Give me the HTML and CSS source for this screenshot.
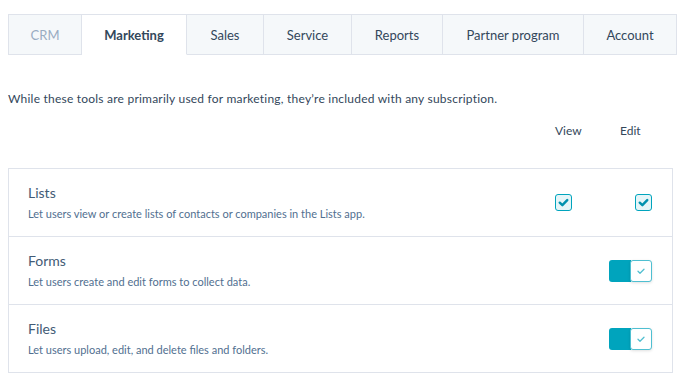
FILE: index.html
```html
<!DOCTYPE html>
<html>
<head>
<meta charset="utf-8">
<link rel="stylesheet" href="styles.css">
</head>
<body>
<div class="page">
  <nav class="tabs">
    <div class="tab tab-disabled">CRM</div>
    <div class="tab tab-active">Marketing</div>
    <div class="tab">Sales</div>
    <div class="tab">Service</div>
    <div class="tab">Reports</div>
    <div class="tab">Partner program</div>
    <div class="tab">Account</div>
  </nav>
  <p class="intro">While these tools are primarily used for marketing, they’re included with any subscription.</p>
  <div class="colheads">
    <span class="colhead colhead-view">View</span>
    <span class="colhead colhead-edit">Edit</span>
  </div>
  <div class="table">
    <div class="row">
      <div class="info">
        <div class="title">Lists</div>
        <div class="desc">Let users view or create lists of contacts or companies in the Lists app.</div>
      </div>
      <div class="controls">
        <span class="check"><svg viewBox="0 0 16 16" width="16" height="16"><path d="M4 8.2 L6.8 10.8 L12 5.4" fill="none" stroke="#0091ae" stroke-width="2.6" stroke-linecap="round" stroke-linejoin="round"/></svg></span>
        <span class="check"><svg viewBox="0 0 16 16" width="16" height="16"><path d="M4 8.2 L6.8 10.8 L12 5.4" fill="none" stroke="#0091ae" stroke-width="2.6" stroke-linecap="round" stroke-linejoin="round"/></svg></span>
      </div>
    </div>
    <div class="row">
      <div class="info">
        <div class="title">Forms</div>
        <div class="desc">Let users create and edit forms to collect data.</div>
      </div>
      <div class="controls">
        <span class="toggle"><span class="toggle-fill"></span><span class="knob"><svg viewBox="0 0 12 12" width="12" height="12"><path d="M3 6.3 L5 8.2 L9 4.2" fill="none" stroke="#52bfd0" stroke-width="1.3" stroke-linecap="round" stroke-linejoin="round"/></svg></span></span>
      </div>
    </div>
    <div class="row">
      <div class="info">
        <div class="title">Files</div>
        <div class="desc">Let users upload, edit, and delete files and folders.</div>
      </div>
      <div class="controls">
        <span class="toggle"><span class="toggle-fill"></span><span class="knob"><svg viewBox="0 0 12 12" width="12" height="12"><path d="M3 6.3 L5 8.2 L9 4.2" fill="none" stroke="#52bfd0" stroke-width="1.3" stroke-linecap="round" stroke-linejoin="round"/></svg></span></span>
      </div>
    </div>
  </div>
</div>
</body>
</html>
```
FILE: styles.css
```css
* { box-sizing: border-box; }
html, body { margin: 0; background: #fff; }
body {
  font-family: "Lato", "Noto Sans", sans-serif;
  color: #33475b;
}
.page { padding: 14px 0 0 8px; width: 688px; }

.tabs {
  display: grid;
  grid-template-columns: 74px 105px 77px 88px 91px 141px 93px;
  width: 669px;
  height: 41px;
}
.tab {
  display: flex;
  align-items: center;
  justify-content: center;
  background: #f5f8fa;
  border: 1px solid #dfe3eb;
  border-left: none;
  font-size: 13px;
  color: #33475b;
}
.tab:first-child { border-left: 1px solid #dfe3eb; }
.tab-disabled { color: #99acc2; }
.tab-active {
  background: #fff;
  border-bottom-color: #fff;
  font-weight: 700;
}

.intro {
  margin: 36px 0 0;
  font-size: 12px;
  line-height: 16px;
  letter-spacing: 0.22px;
  color: #33475b;
}

.colheads {
  position: relative;
  height: 16px;
  margin-top: 16px;
  width: 665px;
}
.colhead { position: absolute; top: 0; font-size: 12px; line-height: 16px; color: #33475b; }
.colhead-view { left: 547px; }
.colhead-edit { left: 612px; }

.table {
  margin-top: 29px;
  width: 665px;
  border: 1px solid #dfe3eb;
}
.row {
  display: flex;
  align-items: center;
  justify-content: space-between;
  height: 68px;
  padding: 0 20px 0 19px;
  border-top: 1px solid #dfe3eb;
}
.row:first-child { border-top: none; height: 67px; }
.title { font-size: 14px; line-height: 18px; color: #425b76; }
.desc { font-size: 11px; line-height: 14px; color: #516f90; margin-top: 5px; }

.controls { display: flex; align-items: center; gap: 63px; }
.check {
  width: 17px;
  height: 17px;
  border: 1px solid #00a4bd;
  border-radius: 3px;
  background: #e5f5f8;
  display: flex;
  align-items: center;
  justify-content: center;
}
.check svg { width: 15px; height: 15px; }

.toggle {
  display: flex;
  width: 43px;
  height: 22px;
}
.toggle-fill {
  width: 22px;
  height: 22px;
  background: #00a4bd;
  border-radius: 3px 0 0 3px;
}
.knob {
  width: 22px;
  height: 22px;
  margin-left: -1px;
  background: #fff;
  border: 1px solid #4fbfd1;
  border-radius: 3px;
  display: flex;
  align-items: center;
  justify-content: center;
  box-shadow: 0 1px 3px rgba(0,0,0,0.12);
}
```
